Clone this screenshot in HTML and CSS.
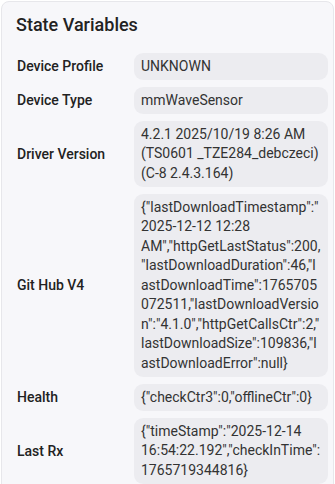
FILE: index.html
```html
<!DOCTYPE html>
<html lang="en">
<head>
  <meta charset="UTF-8">
  <title>State Variables</title>
  <link rel="stylesheet" href="styles.css">
</head>
<body>
  <div class="card">
    <h2 class="card-title">State Variables</h2>

    <!-- Lista de variáveis -->
    <div class="vars">
      <div class="var-name">Device Profile</div>
      <div class="var-value">UNKNOWN</div>

      <div class="var-name">Device Type</div>
      <div class="var-value">mmWaveSensor</div>

      <div class="var-name">Driver Version</div>
      <div class="var-value">4.2.1 2025/10/19 8:26 AM (TS0601 _TZE284_debczeci) (C-8 2.4.3.164)</div>

      <div class="var-name">Git Hub V4</div>
      <div class="var-value">{"lastDownloadTimestamp":"2025-12-12 12:28 AM","httpGetLastStatus":200,"lastDownloadDuration":46,"lastDownloadTime":1765705072511,"lastDownloadVersion":"4.1.0","httpGetCallsCtr":2,"lastDownloadSize":109836,"lastDownloadError":null}</div>

      <div class="var-name">Health</div>
      <div class="var-value">{"checkCtr3":0,"offlineCtr":0}</div>

      <div class="var-name">Last Rx</div>
      <div class="var-value">{"timeStamp":"2025-12-14 16:54:22.192","checkInTime":1765719344816}</div>
    </div>
  </div>
</body>
</html>
```

FILE: styles.css
```css
body {
  margin: 0;
  padding: 1px;
  background-color: #fff;
  font-family: Roboto, "Liberation Sans", sans-serif;
}
.card {
  background-color: #f7f7fa;
  border: 1px solid #e7e7eb;
  border-radius: 8px;
  padding: 11px 5px 10px 14px;
}
.card-title {
  margin: 0 0 16px 0;
  font-size: 18px;
  line-height: 24px;
  font-weight: 500;
  color: #222;
}
.vars {
  display: grid;
  grid-template-columns: 118px 1fr;
  row-gap: 7.5px;
  align-items: center;
}
.var-name {
  font-size: 14px;
  font-weight: 500;
  color: #222;
  padding-left: 1px;
}
.var-value {
  background-color: #ececf0;
  border-radius: 9px;
  padding: 3.5px 7px;
  font-size: 14px;
  line-height: 19.5px;
  color: #333;
  overflow-wrap: anywhere;
}
```
